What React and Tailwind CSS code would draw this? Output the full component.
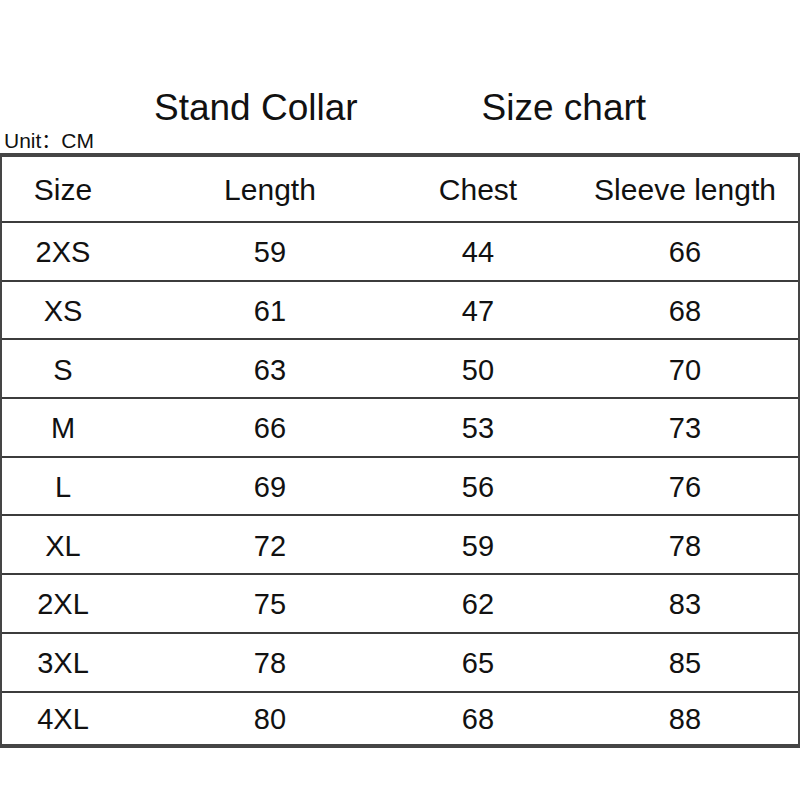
const rows = [
  ['2XS', '59', '44', '66'],
  ['XS', '61', '47', '68'],
  ['S', '63', '50', '70'],
  ['M', '66', '53', '73'],
  ['L', '69', '56', '76'],
  ['XL', '72', '59', '78'],
  ['2XL', '75', '62', '83'],
  ['3XL', '78', '65', '85'],
  ['4XL', '80', '68', '88'],
];

function Row({ cells, className }) {
  return (
    <div className={`grid grid-cols-[122px_292px_124px_1fr] items-center box-border ${className}`}>
      <div className="text-center">{cells[0]}</div>
      <div className="text-center">{cells[1]}</div>
      <div className="text-center">{cells[2]}</div>
      <div className="text-center pl-[32px]">{cells[3]}</div>
    </div>
  );
}

export default function App() {
  return (
    <div className="w-[800px] h-[800px] bg-white text-[#111] font-['Liberation_Sans',Arial,sans-serif] pt-[89px]">
      {/* Title */}
      <div className="flex h-[37px] text-[37px] leading-[37px]">
        <span className="ml-[154px]">Stand Collar</span>
        <span className="ml-[124px]">Size chart</span>
      </div>
      <div className="mt-[3px] h-[21px] text-[21px] leading-[21px] pl-[4px]">
        Unit<span className="font-['Noto_Sans_CJK_SC',sans-serif] text-[20px]">：</span>CM
      </div>

      {/* Table */}
      <div className="mt-[3px] border-t-4 border-b-4 border-x-2 border-[#454545] text-[29px] leading-none">
        <Row
          cells={['Size', 'Length', 'Chest', 'Sleeve length']}
          className="h-[66px] border-b-2 border-[#3c3c3c] text-[30px] pt-[2px]"
        />
        {rows.map((r, i) => (
          <Row
            key={r[0]}
            cells={r}
            className={
              i < rows.length - 1
                ? 'h-[58.7px] border-b-2 border-[#3c3c3c] pt-[3px]'
                : 'h-[51.5px] pt-[3px]'
            }
          />
        ))}
      </div>
    </div>
  );
}
